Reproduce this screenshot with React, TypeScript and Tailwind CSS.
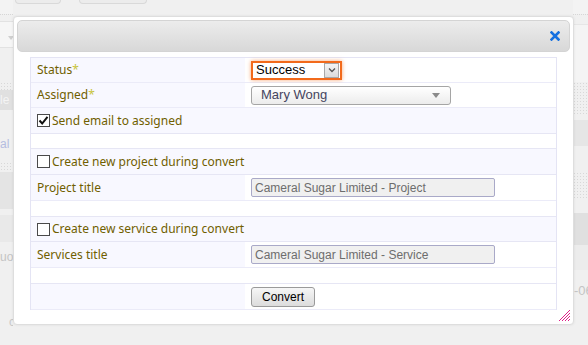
import React from "react";

const label = "font-['Noto_Sans',sans-serif] text-[12px] text-[#705f00]";
const field = "font-['Liberation_Sans',Arial,sans-serif]";
const dotted =
  "bg-[#f0f0f0] bg-[radial-gradient(#d8d8d8_0.8px,transparent_0.8px)] bg-[length:3px_3px]";

function Checkbox({ checked }: { checked?: boolean }) {
  return (
    <span className="flex h-[13px] w-[13px] items-center justify-center border border-[#4a4a4a] bg-white">
      {checked && (
        <svg width="11" height="11" viewBox="0 0 11 11">
          <path d="M1.5 5.5 L4.2 8.5 L9.5 1.8" fill="none" stroke="#111" strokeWidth="2" />
        </svg>
      )}
    </span>
  );
}

function Req({ children }: { children: React.ReactNode }) {
  return (
    <span className={label}>
      {children}
      <span className="text-[#c8c43c]">*</span>
    </span>
  );
}

function SplitRow({
  h,
  left,
  right,
}: {
  h: string;
  left?: React.ReactNode;
  right?: React.ReactNode;
}) {
  return (
    <div className={`flex ${h} border-b border-[#ebebf8]`}>
      <div className="flex w-[214px] items-center bg-[#f8f8ff] pl-[6px]">{left}</div>
      <div className="flex flex-1 items-center bg-white pl-[6px]">{right}</div>
    </div>
  );
}

function FullRow({ h, children, white }: { h: string; children?: React.ReactNode; white?: boolean }) {
  return (
    <div
      className={`flex ${h} items-center gap-[2px] border-b border-[#e6e6f4] pl-[6px] ${
        white ? "bg-white" : "bg-[#f8f8ff]"
      }`}
    >
      {children}
    </div>
  );
}

function TitleInput({ value }: { value: string }) {
  return (
    <div
      className={`${field} flex h-[19px] w-[244px] items-center rounded-[2px] border border-[#a9a9c8] bg-[#f0f0f0] pl-[3px] text-[12px] text-[#6d6d6d]`}
    >
      {value}
    </div>
  );
}

function BackgroundLeft() {
  return (
    <div className="flex w-[13px] flex-col">
      <div className="h-[14px] bg-[#f3f3f3]" />
      <div className="h-[2px] border-t border-dotted border-[#d6d6d6]" />
      <div className="h-[5px]" />
      <div className="relative h-[27px] border-y border-[#e2e2e2] bg-[#f6f6f6]">
        <span className="absolute left-[8px] top-[14px] h-0 w-0 border-x-[3px] border-t-[4px] border-x-transparent border-t-[#cfcfcf]" />
      </div>
      <div className="h-[34px]" />
      <div className={`h-[8px] ${dotted}`} />
      <div className="flex h-[20px] items-center overflow-hidden bg-[#e0e0e0] font-['Liberation_Sans',sans-serif] text-[12px] text-[#f4f4f4]">
        le
      </div>
      <div className="h-[22px]" />
      <div className="flex h-[23px] items-center overflow-hidden font-['Liberation_Sans',sans-serif] text-[12px] text-[#b4bce0]">
        al&nbsp;S
      </div>
      <div className="h-[7px]" />
      <div className={`h-[10px] ${dotted}`} />
      <div className="h-[37px] bg-[#e4e4e4]" />
      <div className="h-[6px]" />
      <div className="h-[27px] bg-[#e9e9e9]" />
      <div className="flex h-[30px] items-center overflow-hidden font-['Liberation_Sans',sans-serif] text-[12px] text-[#c4c4c4]">
        uot
      </div>
      <div className="h-[42px]" />
      <div className="flex h-[16px] items-center overflow-hidden pl-[9px] font-['Liberation_Sans',sans-serif] text-[12px] text-[#c8c8c8]">
        co
      </div>
    </div>
  );
}

function BackgroundRight() {
  return (
    <div className="flex w-[15px] flex-col">
      <div className="h-[14px] bg-[#f3f3f3]" />
      <div className="h-[2px] border-t border-dotted border-[#d6d6d6]" />
      <div className="h-[8px]" />
      <div className="h-[1px] bg-[#e6e6e6]" />
      <div className="h-[57px] bg-[#f4f4f4]" />
      <div className={`h-[33px] ${dotted}`} />
      <div className="h-[5px]" />
      <div className="h-[26px] bg-[#e6e6e6]" />
      <div className="h-[26px]" />
      <div className={`h-[28px] ${dotted}`} />
      <div className="h-[13px]" />
      <div className="h-[32px] bg-[#e0e0e0]" />
      <div className="h-[25px] bg-[#ececec]" />
      <div className="h-[14px]" />
      <div className="flex h-[14px] items-center overflow-hidden pl-[1px] font-['Liberation_Sans',sans-serif] text-[13px] text-[#c4c4c4]">
        -06
      </div>
    </div>
  );
}

export default function App() {
  return (
    <div className="relative h-[345px] w-[588px] overflow-hidden bg-[#f0f0f0]">
      {/* page behind the dialog */}
      <div className="flex h-full justify-between">
        <BackgroundLeft />
        <div className="flex flex-1 gap-[18px] pl-[2px]">
          <div className="h-[4px] w-[46px] rounded-b-[4px] border-x border-b border-[#d9d9d9] bg-[#ececec]" />
          <div className="h-[4px] w-[68px] rounded-b-[4px] border-x border-b border-[#d9d9d9] bg-[#ececec]" />
        </div>
        <BackgroundRight />
      </div>

      {/* dialog */}
      <div className="absolute left-[13px] top-[16px] flex h-[309px] w-[561px] flex-col rounded-[4px] border border-[#dedede] bg-white p-[3px] shadow-[0_0_3px_rgba(0,0,0,0.08)]">
        <div className="flex h-[32px] items-center justify-end rounded-[5px] border border-[#d4d4d4] bg-gradient-to-b from-[#ececec] to-[#d8d8d8] pr-[9px]">
          <svg width="10" height="10" viewBox="0 0 10 10">
            <path d="M1.5 1.5 L8.5 8.5 M8.5 1.5 L1.5 8.5" stroke="#1670e0" strokeWidth="2.6" strokeLinecap="square" />
          </svg>
        </div>

        <div className="ml-[13px] mt-[5px] flex w-[527px] flex-col border-x border-t border-[#e4e4f4]">
          <SplitRow
            h="h-[25px]"
            left={<Req>Status</Req>}
            right={
              <div className="flex h-[19px] w-[91px] items-center justify-between border-2 border-[#f26a1b] bg-white pl-[3px] pr-[1px] shadow-[0_0_4px_rgba(242,106,27,0.6)]">
                <span className={`${field} text-[13px] text-black`}>Success</span>
                <span className="flex h-[15px] w-[15px] items-center justify-center border border-[#a8a8a8] bg-gradient-to-b from-[#f4f4f4] to-[#dcdcdc]">
                  <svg width="8" height="6" viewBox="0 0 8 6">
                    <path d="M1 1.5 L4 4.5 L7 1.5" fill="none" stroke="#555" strokeWidth="1.3" />
                  </svg>
                </span>
              </div>
            }
          />
          <SplitRow
            h="h-[25px]"
            left={<Req>Assigned</Req>}
            right={
              <div className="flex h-[19px] w-[200px] items-center justify-between rounded-[3px] border border-[#a5a5a5] bg-gradient-to-b from-white to-[#ececec] pl-[9px] pr-[10px]">
                <span className={`${field} text-[13px] text-[#454560]`}>Mary Wong</span>
                <span className="h-0 w-0 border-x-[4px] border-t-[5px] border-x-transparent border-t-[#8a8a8a]" />
              </div>
            }
          />
          <FullRow h="h-[26px]">
            <Checkbox checked />
            <span className={label}>Send email to assigned</span>
          </FullRow>
          <FullRow h="h-[15px]" white />
          <FullRow h="h-[26px]">
            <Checkbox />
            <span className={label}>Create new project during convert</span>
          </FullRow>
          <SplitRow
            h="h-[26px]"
            left={<span className={label}>Project title</span>}
            right={<TitleInput value="Cameral Sugar Limited - Project" />}
          />
          <FullRow h="h-[16px]" white />
          <FullRow h="h-[25px]">
            <Checkbox />
            <span className={label}>Create new service during convert</span>
          </FullRow>
          <SplitRow
            h="h-[26px]"
            left={<span className={label}>Services title</span>}
            right={<TitleInput value="Cameral Sugar Limited - Service" />}
          />
          <FullRow h="h-[16px]" white />
          <SplitRow
            h="h-[26px]"
            right={
              <button
                className={`${field} flex h-[20px] items-center rounded-[3px] border border-[#9a9a9a] bg-gradient-to-b from-[#f6f6f6] to-[#dcdcdc] px-[10px] text-[12px] text-black`}
              >
                Convert
              </button>
            }
          />
        </div>

        <svg className="absolute bottom-[2px] right-[2px]" width="13" height="13" viewBox="0 0 13 13">
          <path d="M12 1 L1 12 M12 4 L4 12 M12 7 L7 12 M12 10 L10 12" stroke="#e0208a" strokeWidth="1" />
        </svg>
      </div>
    </div>
  );
}
